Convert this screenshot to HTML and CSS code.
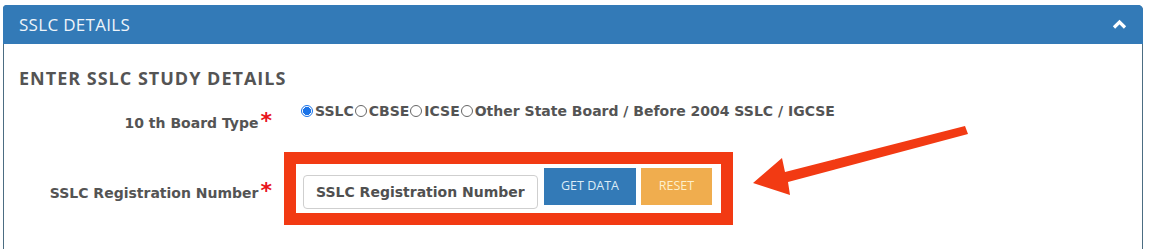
FILE: index.html
```html
<!DOCTYPE html>
<html>
<head>
<meta charset="utf-8">
<link rel="stylesheet" href="styles.css">
</head>
<body>
<div class="panel">
  <div class="panel-heading">
    <span class="panel-title">SSLC DETAILS</span>
    <svg class="chevron" width="15" height="10" viewBox="0 0 15 10"><polyline points="2,8.5 7.5,3 13,8.5" fill="none" stroke="#fff" stroke-width="3.2"/></svg>
  </div>
  <div class="panel-body">
    <h4 class="section-title">ENTER SSLC STUDY DETAILS</h4>
    <div class="form-row row-board">
      <label class="form-label">10 th Board Type<span class="req">*</span></label>
      <div class="radios">
        <input type="radio" name="board" class="radio" checked><span>SSLC</span><input type="radio" name="board" class="radio"><span>CBSE</span><input type="radio" name="board" class="radio"><span>ICSE</span><input type="radio" name="board" class="radio"><span>Other State Board / Before 2004 SSLC / IGCSE</span>
      </div>
    </div>
    <div class="form-row row-reg">
      <label class="form-label">SSLC Registration Number<span class="req">*</span></label>
      <div class="highlight">
        <input type="text" class="reg-input" placeholder="SSLC Registration Number">
        <button class="btn btn-primary">GET DATA</button>
        <button class="btn btn-warning">RESET</button>
      </div>
    </div>
  </div>
</div>
<svg class="arrow" width="1149" height="249" viewBox="0 0 1149 249">
  <polygon points="753,183 790,195 788,182 968,134 965,126 785,172 782,158" fill="#f23a13"/>
</svg>
</body>
</html>
```
FILE: styles.css
```css
html, body {
  margin: 0;
  padding: 0;
  background: #fff;
}
body {
  position: relative;
  width: 1149px;
  height: 249px;
  overflow: hidden;
  font-family: "DejaVu Sans", Verdana, sans-serif;
}
.panel {
  margin: 5px 0 0 3px;
  width: 1140px;
  height: 244px;
  box-sizing: border-box;
  border: 1px solid #4c6d82;
  border-bottom: 0;
  border-top-color: #337ab7;
  border-radius: 4px 5px 0 0;
  background: #fff;
}
.panel-heading {
  height: 39px;
  background: #337ab7;
  margin: -1px -1px 0 -1px;
  border-radius: 4px 5px 0 0;
  display: flex;
  align-items: center;
  justify-content: space-between;
  padding: 0 16px 0 16px;
  box-sizing: border-box;
}
.panel-title {
  font-family: "Open Sans", sans-serif;
  font-size: 17px;
  font-weight: 400;
  color: #eef4fa;
  letter-spacing: 0.3px;
}
.chevron {
  display: block;
  margin-top: -2px;
}
.panel-body {
  padding: 24px 15px 0 15px;
}
.section-title {
  margin: 0;
  font-family: "Open Sans", sans-serif;
  font-size: 18px;
  line-height: 20px;
  font-weight: 700;
  letter-spacing: 1px;
  color: #545454;
}
.form-row {
  display: grid;
  grid-template-columns: 253px 1fr;
  column-gap: 12px;
  align-items: start;
}
.row-board {
  margin-top: 13px;
}
.row-reg {
  margin-top: 19px;
}
.form-label {
  text-align: right;
  font-size: 14px;
  font-weight: 700;
  line-height: 20px;
  color: #545454;
  white-space: nowrap;
}
.row-board .form-label {
  padding-top: 12px;
}
.row-reg .form-label {
  padding-top: 31px;
}
.req {
  color: #e8141a;
  font-size: 22px;
  line-height: 20px;
  vertical-align: top;
  margin-left: 2px;
  display: inline-block;
  height: 14px;
  overflow: visible;
  transform: translateY(-2px);
}
.radios {
  padding-left: 17px;
  font-size: 14px;
  font-weight: 700;
  line-height: 20px;
  color: #545454;
  white-space: nowrap;
  display: flex;
  align-items: center;
}
.radio {
  -webkit-appearance: none;
  appearance: none;
  width: 12px;
  height: 12px;
  margin: 0 2px 0 1px;
  border: 1px solid #666;
  border-radius: 50%;
  box-sizing: border-box;
  background: #fff;
  flex: none;
}
.radio:checked {
  border: 1px solid #1a73e8;
  background: radial-gradient(circle, #1a73e8 0 3.8px, #fff 4.2px);
  width: 12px;
  height: 12px;
  margin-left: 0;
}
.highlight {
  justify-self: start;
  display: flex;
  align-items: flex-start;
  border: 12px solid #f23a13;
  padding: 4px 9px 4px 7px;
}
.reg-input {
  margin-top: 7px;
  width: 235px;
  height: 34px;
  box-sizing: border-box;
  border: 1px solid #cfcfcf;
  border-radius: 4px;
  padding: 0 12px;
  font-family: "DejaVu Sans", Verdana, sans-serif;
  font-size: 14px;
  font-weight: 700;
  color: #555;
  outline: none;
}
.reg-input::placeholder {
  color: #505050;
  opacity: 1;
}
.btn {
  height: 37px;
  border: 0;
  border-radius: 0;
  font-family: "Open Sans", sans-serif;
  font-size: 12.5px;
  font-weight: 400;
  padding: 0 0 2px 0;
  margin-left: 6px;
}
.btn-primary {
  width: 92px;
  background: #337ab7;
  color: #dcecf6;
}
.btn-warning {
  width: 71px;
  margin-left: 5px;
  background: #f0ad4e;
  color: #fdf0cc;
}
.arrow {
  position: absolute;
  left: 0;
  top: 0;
  pointer-events: none;
}
```
